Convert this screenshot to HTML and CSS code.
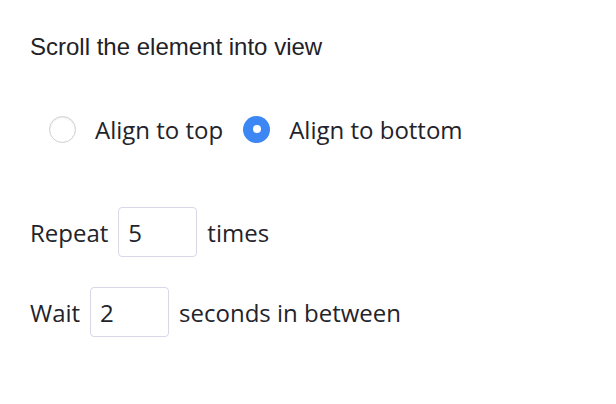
FILE: index.html
```html
<!DOCTYPE html>
<html lang="en">
<head>
<meta charset="utf-8">
<title>Scroll into view</title>
<link rel="stylesheet" href="styles.css">
</head>
<body>
<main class="panel">
  <h1 class="title">Scroll the element into view</h1>
  <div class="radios">
    <label class="radio">
      <input type="radio" name="align" value="top">
      <span class="dot"></span>
      <span class="label">Align to top</span>
    </label>
    <label class="radio">
      <input type="radio" name="align" value="bottom" checked>
      <span class="dot"></span>
      <span class="label">Align to bottom</span>
    </label>
  </div>
  <div class="row row-repeat">
    <span>Repeat</span>
    <input class="num" type="text" value="5">
    <span>times</span>
  </div>
  <div class="row row-wait">
    <span>Wait</span>
    <input class="num" type="text" value="2">
    <span>seconds in between</span>
  </div>
</main>
</body>
</html>
```
FILE: styles.css
```css
html, body {
  margin: 0;
  padding: 0;
  background: #ffffff;
}
.panel {
  padding: 33px 0 0 30px;
  font-family: "Open Sans", "Noto Sans", sans-serif;
  color: #23232b;
}
.title {
  margin: 0;
  font-family: "Liberation Sans", Arial, sans-serif;
  font-weight: normal;
  font-size: 24px;
  line-height: 28px;
  color: #222226;
}
.radios {
  display: flex;
  align-items: center;
  gap: 20px;
  margin: 48px 0 0 19px;
  height: 40px;
}
.radio {
  display: flex;
  align-items: center;
  gap: 19px;
  font-size: 24px;
  cursor: pointer;
}
.radio input {
  display: none;
}
.dot {
  box-sizing: border-box;
  width: 27px;
  height: 27px;
  border-radius: 50%;
  border: 1.5px solid #cfcfd2;
  background: #fff;
  box-shadow: inset 0 1px 2px rgba(0,0,0,0.08);
  display: flex;
  align-items: center;
  justify-content: center;
}
.radio input:checked + .dot {
  border: none;
  background: #3d87f5;
  box-shadow: none;
}
.radio input:checked + .dot::after {
  content: "";
  width: 8px;
  height: 8px;
  border-radius: 50%;
  background: #fff;
}
.row {
  display: flex;
  align-items: center;
  gap: 10px;
  font-size: 24px;
}
.row-repeat {
  margin-top: 58px;
}
.row-wait {
  margin-top: 30px;
}
.num {
  box-sizing: border-box;
  width: 79px;
  height: 50px;
  border: 1.5px solid #d8d7e6;
  border-radius: 4px;
  padding: 0 9px;
  font-family: "Open Sans", "Noto Sans", sans-serif;
  font-size: 24px;
  color: #23232b;
  background: #fff;
  outline: none;
}
```
